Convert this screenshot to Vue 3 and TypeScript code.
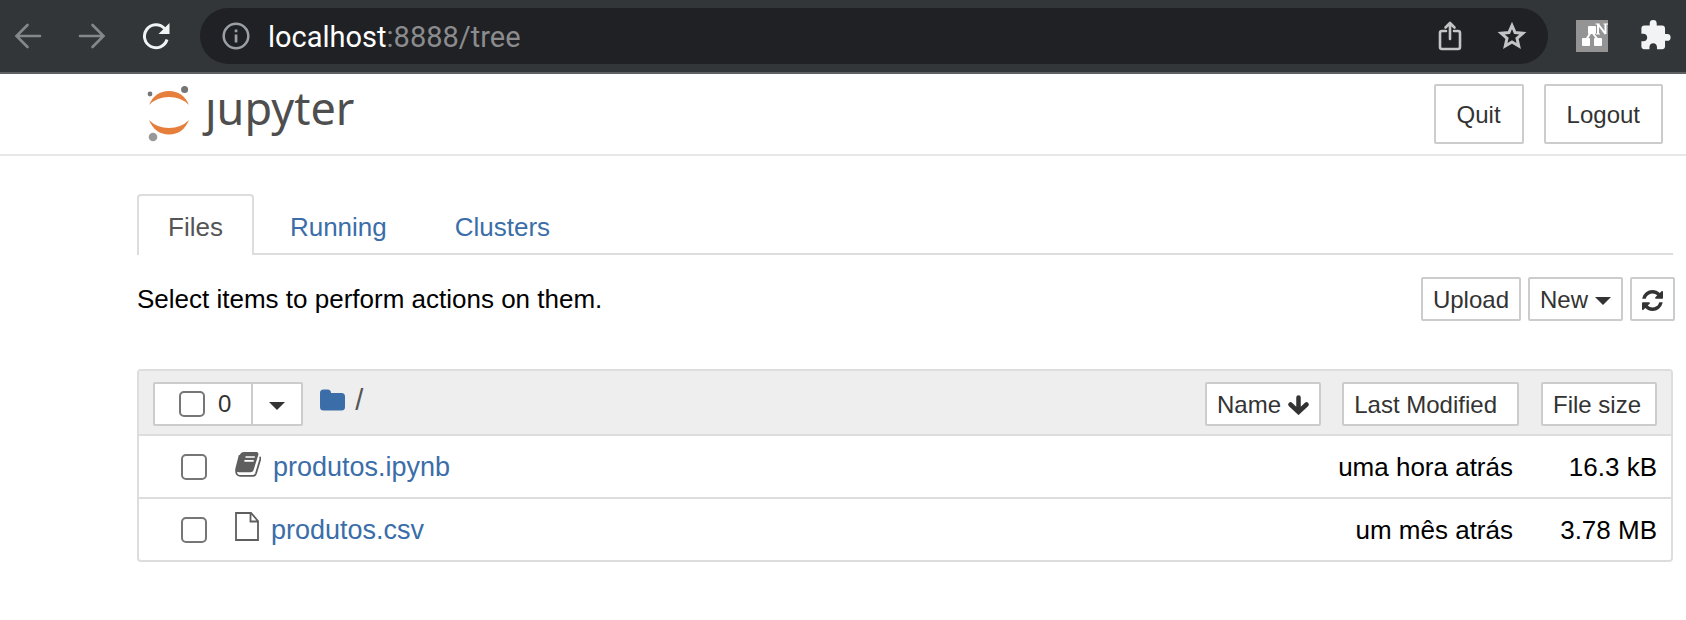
<script setup lang="ts">
import { ref, computed } from 'vue'

interface Entry {
  name: string
  kind: 'notebook' | 'file'
  modified: string
  size: string
  selected: boolean
}

const tabs: string[] = ['Files', 'Running', 'Clusters']
const activeTab = ref('Files')

const entries = ref<Entry[]>([
  { name: 'produtos.ipynb', kind: 'notebook', modified: 'uma hora atrás', size: '16.3 kB', selected: false },
  { name: 'produtos.csv', kind: 'file', modified: 'um mês atrás', size: '3.78 MB', selected: false },
])

const selectedCount = computed(() => entries.value.filter((e) => e.selected).length)
const allSelected = computed({
  get: () => selectedCount.value === entries.value.length,
  set: (value: boolean) => entries.value.forEach((e) => (e.selected = value)),
})
</script>

<template>
  <div class="page">
    <div class="browser">
      <button class="nav" type="button" aria-label="Back">
        <svg width="28" height="28" viewBox="0 0 28 28" fill="none" stroke="#85888a" stroke-width="2.6" stroke-linecap="round">
          <path d="M26 14H3M13.500 3L2.500 14L13.500 25" />
        </svg>
      </button>
      <button class="nav" type="button" aria-label="Forward">
        <svg width="28" height="28" viewBox="0 0 28 28" fill="none" stroke="#85888a" stroke-width="2.6" stroke-linecap="round">
          <path d="M2 14H25M14.500 3L25.500 14L14.500 25" />
        </svg>
      </button>
      <button class="nav" type="button" aria-label="Reload">
        <svg width="28" height="28" viewBox="0 0 28 28">
          <path d="M25 17.500A11.500 11.500 0 1 1 22.500 6.500" fill="none" stroke="#f1f3f4" stroke-width="3" />
          <path d="M27.500 1V12H16.500Z" fill="#f1f3f4" />
        </svg>
      </button>
      <div class="address">
        <svg width="28" height="28" viewBox="0 0 28 28">
          <circle cx="14" cy="14" r="12.300" fill="none" stroke="#9aa0a6" stroke-width="2.5" />
          <path d="M12.700 7.500h2.700v2.700h-2.700zM12.700 12.500h2.700v8h-2.700z" fill="#9aa0a6" />
        </svg>
        <div class="url"><span class="host">localhost</span>:8888/tree</div>
        <button class="nav" type="button" aria-label="Share">
          <svg width="24" height="30" viewBox="0 0 24 30" fill="none" stroke="#c3c4c6" stroke-width="2.6" stroke-linecap="round" stroke-linejoin="round">
            <path d="M8 10H4Q2 10 2 12V26Q2 28 4 28H20Q22 28 22 26V12Q22 10 20 10H16M12 18V2.500M7.500 6.500L12 2L16.500 6.500" />
          </svg>
        </button>
        <button class="nav" type="button" aria-label="Bookmark">
          <svg width="32" height="32" viewBox="0 0 32 32" fill="none" stroke="#c3c4c6" stroke-width="3">
            <path d="M16 5.500L19.100 12.600L26.800 13.300L21 18.400L22.700 26L16 22L9.300 26L11 18.400L5.200 13.300L12.900 12.600Z" />
          </svg>
        </button>
      </div>
      <button class="nav" type="button" aria-label="Sitemap extension">
        <svg width="32" height="32" viewBox="0 0 32 32">
          <path fill="#949494" d="M0 0h32v32H0z" />
          <path d="M15 12L10 20M16 12L22 20" stroke="#fff" stroke-width="2" />
          <g fill="#fff">
            <rect x="12" y="6" width="8" height="8" rx="1" />
            <rect x="6" y="18" width="8" height="8" rx="1" />
            <rect x="18" y="18" width="8" height="8" rx="1" />
          </g>
          <path d="M22 14V4M29.500 14V4M22 4L29.500 14" fill="none" stroke="#fff" stroke-width="2" />
          <path d="M19.500 4h4M27.500 4H32M20 14h4" stroke="#fff" stroke-width="1.200" />
        </svg>
      </button>
      <button class="nav" type="button" aria-label="Extensions">
        <svg width="32" height="32" viewBox="1 1 23 23" fill="#f1f3f4">
          <path d="M20.500 11H19V7c0-1.100-.9-2-2-2h-4V3.500a2.500 2.500 0 0 0-5 0V5H4c-1.100 0-1.990.9-1.990 2v3.800H3.500c1.490 0 2.700 1.210 2.700 2.700s-1.210 2.700-2.700 2.700H2V20c0 1.100.9 2 2 2h3.800v-1.500c0-1.490 1.210-2.700 2.700-2.700s2.700 1.210 2.700 2.700V22H17c1.100 0 2-.9 2-2v-4h1.500a2.500 2.500 0 0 0 0-5z" />
        </svg>
      </button>
    </div>

    <header class="header">
      <a class="logo" href="#" aria-label="Jupyter">
        <svg width="44" height="56" viewBox="0 0 44 56">
          <path fill="#e67e3c" d="M2 19Q8 5 22 5T42 19Q34 11 22 11T2 19Z" />
          <path fill="#e67e3c" d="M2 34Q8 48.500 22 48.500T42 34Q34 42 22 42T2 34Z" />
          <circle cx="3" cy="8" r="2.400" fill="#757575" />
          <circle cx="37.600" cy="3.600" r="3.500" fill="#757575" />
          <circle cx="6" cy="51" r="4.300" fill="#989898" />
        </svg>
        <span class="wordmark">ȷupyter</span>
      </a>
      <div class="session">
        <button class="btn big" type="button">Quit</button>
        <button class="btn big" type="button">Logout</button>
      </div>
    </header>

    <main class="content">
      <nav class="tabs">
        <a
          v-for="tab in tabs"
          :key="tab"
          href="#"
          class="tab"
          :class="{ active: tab === activeTab }"
          @click.prevent="activeTab = tab"
        >{{ tab }}</a>
      </nav>

      <div class="toolbar">
        <span>Select items to perform actions on them.</span>
        <div class="actions">
          <button class="btn" type="button">Upload</button>
          <button class="btn" type="button">New<span class="caret"></span></button>
          <button class="btn" type="button" aria-label="Refresh">
            <svg width="21" height="21" viewBox="0 0 1536 1536" fill="#333">
              <path d="M1511 928q0 5-1 7-64 268-268 434.500T764 1536q-146 0-282.500-55T238 1324l-129 129q-19 19-45 19t-45-19-19-45V960q0-26 19-45t45-19h448q26 0 45 19t19 45-19 45l-137 137q71 66 161 102t187 36q134 0 250-65t186-179q11-17 53-117 8-23 30-23h192q13 0 22.500 9.500t9.500 22.500zm25-800v448q0 26-19 45t-45 19h-448q-26 0-45-19t-19-45 19-45l138-138Q969 256 768 256q-134 0-250 65T332 500q-11 17-53 117-8 23-30 23H50q-13 0-22.500-9.500T18 608v-7q65-268 270-434.500T768 0q146 0 284 55.500T1297 212l130-129q19-19 45-19t45 19 19 45z" />
            </svg>
          </button>
        </div>
      </div>

      <div class="listing">
        <table>
          <thead>
            <tr>
              <th>
                <div class="row">
                  <div class="selector">
                    <label class="count"><input v-model="allSelected" type="checkbox" />{{ selectedCount }}</label>
                    <button class="drop" type="button" aria-label="Select by type"><span class="caret"></span></button>
                  </div>
                  <div class="crumbs">
                    <a href="#" aria-label="Home folder">
                      <svg width="25" height="22" viewBox="0 0 25 22" fill="#3b6ea8">
                        <path d="M0 4Q0 0.500 3.500 0.500H7.500Q11 0.500 11 4H21.500Q25 4 25 7.500V18Q25 21.500 21.500 21.500H3.500Q0 21.500 0 18Z" />
                      </svg>
                    </a>
                    <span>/</span>
                  </div>
                  <button class="btn by-name" type="button">
                    Name
                    <svg width="21" height="20" viewBox="0 0 21 20" fill="none" stroke="#333" stroke-width="4.500" stroke-linecap="round" stroke-linejoin="miter">
                      <path d="M10.500 2.500V16M2.500 9.500L10.500 17L18.500 9.500" />
                    </svg>
                  </button>
                </div>
              </th>
              <th class="modified"><button class="btn sort wide" type="button">Last Modified</button></th>
              <th class="size"><button class="btn sort" type="button">File size</button></th>
            </tr>
          </thead>
          <tbody>
            <tr v-for="entry in entries" :key="entry.name">
              <td>
                <div class="row item">
                  <input v-model="entry.selected" type="checkbox" :aria-label="'Select ' + entry.name" />
                  <svg v-if="entry.kind === 'notebook'" class="icon" width="26" height="32" viewBox="0 0 26 32">
                    <path d="M7 6L4.500 5L1.200 18Q0.500 24.800 5 24.800H18Q20.200 24.800 21 22.500L25.200 8.500Q25.800 6.500 24.500 6" fill="none" stroke="#5e5e5e" stroke-width="1.800" />
                    <path d="M9 1H21.500Q24 1.200 23.300 4L18.500 19.200Q17.800 21.200 15.500 21.200H4Q1 21.200 0.800 19L4.500 5Q5.500 1 9 1Z" fill="#5e5e5e" />
                    <path d="M10.500 6H19.800M9.400 9.800H18.700" stroke="#fff" stroke-width="1.700" />
                  </svg>
                  <svg v-else class="icon" width="24" height="36" viewBox="0 0 24 36" fill="none" stroke="#5e5e5e" stroke-width="1.800">
                    <path d="M1 1H16L23 9V28H1ZM15.500 1V9.500H23" />
                  </svg>
                  <a href="#">{{ entry.name }}</a>
                </div>
              </td>
              <td class="modified">{{ entry.modified }}</td>
              <td class="size">{{ entry.size }}</td>
            </tr>
          </tbody>
        </table>
      </div>
    </main>
  </div>
</template>

<style>
body {
  margin: 0;
  background: #fff;
}
</style>

<style scoped>
.page,
.page * {
  box-sizing: border-box;
}
.page {
  font: 26px/36px "Liberation Sans", Arial, sans-serif;
  color: #000;
}
svg {
  display: block;
  flex: none;
}
button {
  font: inherit;
  cursor: pointer;
}
a {
  color: #3b6ea8;
  text-decoration: none;
}
.browser {
  display: flex;
  align-items: center;
  gap: 36px;
  height: 74px;
  padding: 0 14px;
  background: #323639;
  border-bottom: 2px solid #5f6062;
}
.browser > .nav:last-child {
  margin-left: -4px;
}
.nav {
  padding: 0;
  border: 0;
  background: none;
}
.address {
  flex: 1;
  display: flex;
  align-items: center;
  gap: 34px;
  height: 56px;
  margin: 0 -8px 0 -6px;
  padding: 0 20px 0 22px;
  border-radius: 28px;
  background: #202124;
}
.url {
  flex: 1;
  margin-left: -16px;
  padding-top: 2px;
  font: 29px/36px Roboto, sans-serif;
  color: #8b8c8e;
}
.host {
  color: #fff;
}
.header {
  display: flex;
  align-items: center;
  justify-content: space-between;
  height: 82px;
  padding: 0 23px 0 147px;
  border-bottom: 2px solid #e7e7e7;
}
.logo {
  display: flex;
  align-items: center;
  gap: 14px;
}
.wordmark {
  padding-bottom: 12px;
  font: 45px/48px "Noto Sans", sans-serif;
  color: #4e4e4e;
}
.session {
  display: flex;
  gap: 20px;
}
.btn {
  display: flex;
  align-items: center;
  height: 44px;
  padding: 2px 10px 0;
  border: 2px solid #ccc;
  border-radius: 2px;
  background: #fff;
  color: #333;
  font-size: 24px;
  line-height: 36px;
  white-space: nowrap;
}
.big {
  height: 60px;
  padding: 2px 21px 0;
}
.content {
  padding: 38px 13px 0 137px;
}
.tabs {
  display: flex;
  gap: 4px;
  border-bottom: 2px solid #ddd;
}
.tab {
  height: 61px;
  margin-bottom: -2px;
  padding: 13px 30px 0;
  border: 2px solid transparent;
  border-bottom: 0;
  border-radius: 4px 4px 0 0;
}
.active {
  padding: 13px 29px 0;
  border-color: #ddd;
  background: #fff;
  color: #555;
}
.toolbar {
  display: flex;
  align-items: center;
  justify-content: space-between;
  margin: 22px -2px 48px 0;
}
.actions {
  display: flex;
  gap: 7px;
}
.caret {
  border: 8px solid transparent;
  border-top-color: #333;
  border-bottom: 0;
}
.btn .caret {
  margin: 2px 0 0 7px;
}
.listing {
  border: 2px solid #ddd;
  border-radius: 4px;
}
table {
  width: 100%;
  border-spacing: 0;
}
th {
  height: 65px;
  padding: 11px 0 8px;
  border-bottom: 2px solid #ddd;
  background: #eee;
  font-weight: 400;
  vertical-align: top;
}
td {
  height: 61px;
  padding: 0;
  white-space: nowrap;
}
tr:not(:last-child) td {
  height: 63px;
  border-bottom: 2px solid #ddd;
}
.modified {
  width: 198px;
  text-align: right;
}
td.modified {
  padding-right: 6px;
}
.size {
  width: 152px;
  padding-right: 14px;
  text-align: right;
}
.row {
  display: flex;
  align-items: center;
  padding-left: 14px;
}
.item {
  height: 61px;
  padding-left: 42px;
  font-size: 27px;
}
.icon {
  margin: 0 12px 0 28px;
}
input {
  appearance: none;
  flex: none;
  width: 26px;
  height: 26px;
  margin: 0;
  border: 2px solid #767676;
  border-radius: 5px;
  background: #fff;
}
input:checked {
  background: #3b6ea8;
}
.selector {
  display: flex;
  height: 44px;
  border: 2px solid #ccc;
  border-radius: 2px;
  background: #fff;
}
.count {
  display: flex;
  align-items: center;
  gap: 13px;
  padding: 0 20px 0 24px;
  color: #333;
  font-size: 24px;
}
.drop {
  display: flex;
  align-items: center;
  padding: 4px 16px 0;
  border: 0;
  border-left: 2px solid #ccc;
  background: none;
}
.crumbs {
  display: flex;
  align-items: center;
  gap: 10px;
  padding: 0 0 8px 17px;
  color: #555;
  font-size: 29px;
}
.by-name {
  gap: 7px;
  margin-left: auto;
}
.sort {
  width: max-content;
  margin-left: auto;
  padding-right: 14px;
}
.wide {
  padding-right: 20px;
}
</style>
